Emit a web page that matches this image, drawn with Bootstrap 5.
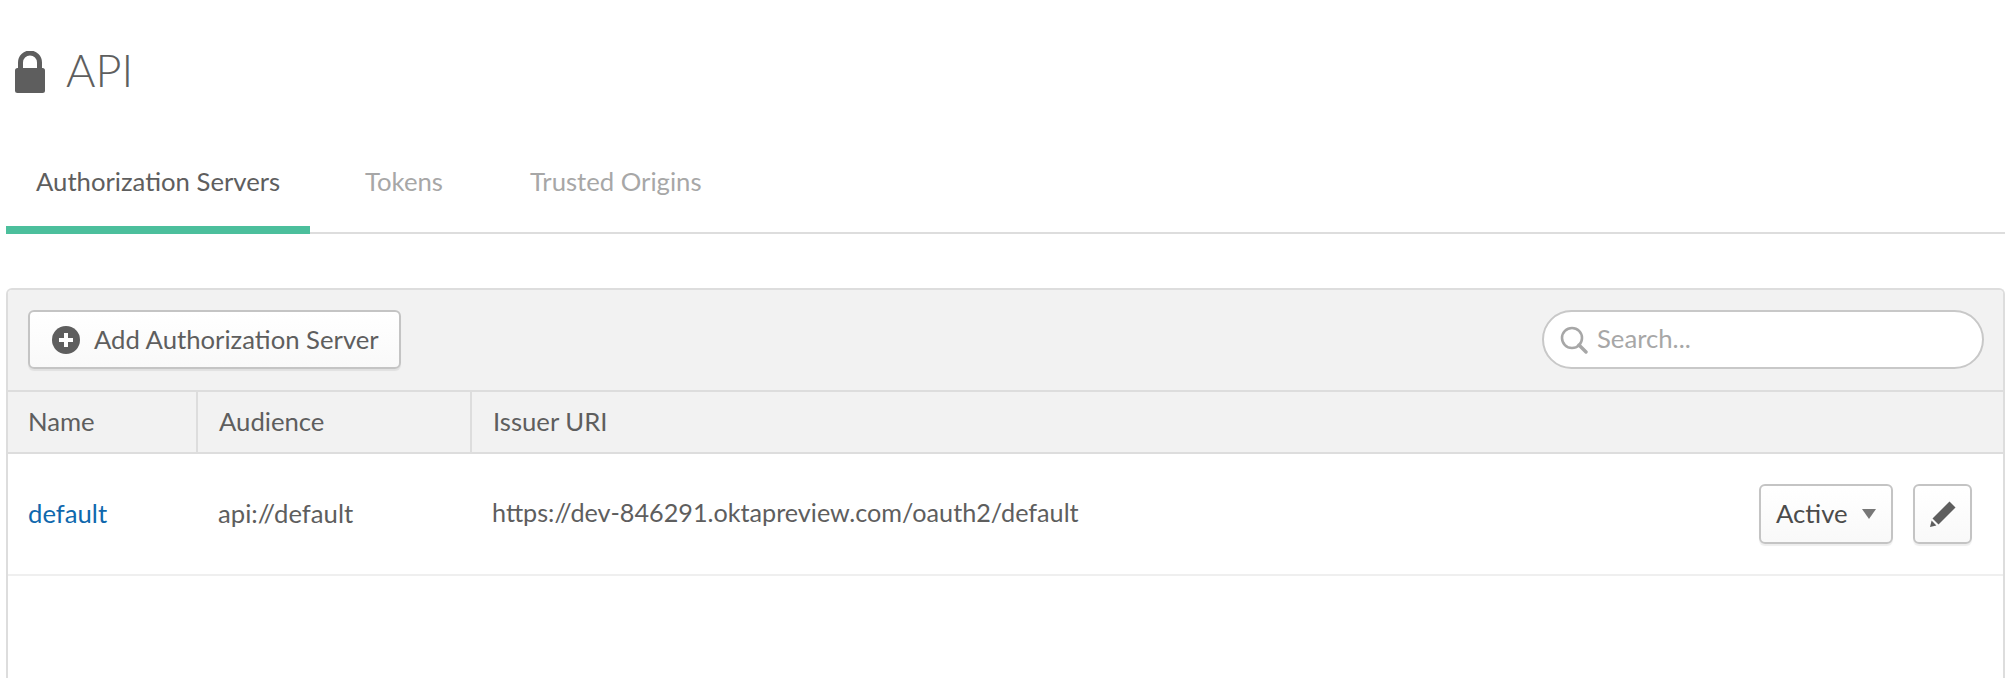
<!DOCTYPE html>
<html lang="en">
<head>
  <meta charset="UTF-8" />
  <meta name="viewport" content="width=device-width, initial-scale=1">
  <title>API</title>
  <link href="https://cdn.jsdelivr.net/npm/bootstrap@5.3.0/dist/css/bootstrap.min.css" rel="stylesheet">
  <style>
    html, body { height: 678px; overflow: hidden; }
    body {
      padding: 0 11px 0 6px;
      background: #fff;
      color: #5e5e5e;
      font-family: Lato, "Liberation Sans", sans-serif;
      font-size: 25.7px;
    }
    .page-head { height: 144px; padding-left: 9px; gap: 21px; }
    .page-head h1 { margin: 0 0 4px; font-family: Lato, sans-serif; font-size: 45px; font-weight: 300; color: #5e5e5e; line-height: 1; }
    .tab-bar { height: 90px; border-bottom: 2px solid #ddd; }
    .tab-bar .nav-link {
      height: 90px;
      padding: 22px 30px 0;
      color: #a7a7a7;
      font-size: 25.7px;
      line-height: 30px;
      border-bottom: 8px solid transparent;
    }
    .tab-bar .nav-link.active { color: #5e5e5e; border-bottom-color: #4cbf9c; }
    .tab-bar .nav-item + .nav-item { margin-left: 25px; }
    .tab-bar .nav-item:last-child { margin-left: 27px; }
    .tab-bar .nav-item:first-child .nav-link { width: 304px; white-space: nowrap; }
    .panel-box {
      margin-top: 54px;
      height: 402px;
      border: 2px solid #ddd;
      border-bottom: 0;
      border-radius: 6px 6px 0 0;
      overflow: hidden;
    }
    .panel-tools { height: 102px; background: #f2f2f2; padding: 20px 19px 0 20px; border-bottom: 2px solid #ddd; }
    .btn-add, .btn-state, .btn-edit {
      background: linear-gradient(#fff, #f9f9f9);
      border: 2px solid #c4c4c4;
      border-radius: 6px;
      color: #5e5e5e;
      font-size: 25.7px;
      line-height: 30px;
      box-shadow: 0 2px 1px rgba(0,0,0,.07);
    }
    .btn-add { width: 373px; height: 59px; padding: 0 0 2px 22px; gap: 14px; white-space: nowrap; }
    .btn-add svg { margin-top: 2px; }
    .search-wrap { width: 442px; height: 59px; background: #fff; border: 2px solid #c8c8c8; border-radius: 30px; padding: 0 0 2px 16px; gap: 9px; }
    .search-wrap svg { margin-top: 2px; }
    .search-wrap input { border: 0; outline: 0; padding: 0; width: 360px; font-size: 25.7px; color: #5e5e5e; background: transparent; font-family: inherit; }
    .search-wrap input::placeholder { color: #a7a7a7; opacity: 1; }
    .api-table { table-layout: fixed; margin: 0; font-size: 25.7px; --bs-table-color: #5e5e5e; color: #5e5e5e; }
    .api-table th {
      height: 61px;
      padding: 0 0 2px 21px;
      background: #f2f2f2;
      font-weight: 400;
      color: #5e5e5e;
      vertical-align: middle;
      border-bottom: 2px solid #ddd;
    }
    .api-table th:first-child { padding-left: 20px; }
    .api-table th + th { border-left: 2px solid #ddd; }
    .api-table td {
      height: 122px;
      padding: 0 0 2px 21px;
      vertical-align: middle;
      border-bottom: 2px solid #efefef;
      color: #5e5e5e;
    }
    .api-table td:first-child { padding-left: 20px; }
    .api-table td.uri-cell { font-size: 25.2px; }
    .api-table a { color: #0f68ad; text-decoration: none; }
    .api-table td.row-actions { padding: 0 31px 0 0; }
    .btn-state { width: 134px; height: 60px; padding: 0 0 2px 15px; color: #4b4b4b; gap: 14px; }
    .btn-edit { width: 59px; height: 60px; padding: 0; }
    .row-actions .gap-tools { gap: 20px; }
    .caret-down { width: 0; height: 0; margin-top: 2px; border-left: 7px solid transparent; border-right: 7px solid transparent; border-top: 10px solid #777; }
  </style>
</head>
<body>

  <div class="page-head d-flex align-items-center">
    <svg width="30" height="42" viewBox="0 0 30 42" aria-hidden="true">
      <path d="M5.5 19V11.5a9.5 9.5 0 0 1 19 0V19" fill="none" stroke="#5e5e5e" stroke-width="5"/>
      <rect x="0" y="17" width="30" height="25" rx="2.5" fill="#5e5e5e"/>
    </svg>
    <h1>API</h1>
  </div>

  <!-- Tabs -->
  <ul class="nav tab-bar">
    <li class="nav-item"><a class="nav-link active" href="#">Authorization Servers</a></li>
    <li class="nav-item"><a class="nav-link" href="#">Tokens</a></li>
    <li class="nav-item"><a class="nav-link" href="#">Trusted Origins</a></li>
  </ul>

  <div class="panel-box">
    <div class="panel-tools d-flex justify-content-between align-items-start">
      <button class="btn btn-add d-flex align-items-center" type="button">
        <svg width="28" height="28" viewBox="0 0 28 28" aria-hidden="true">
          <circle cx="14" cy="14" r="14" fill="#5e5e5e"/>
          <path d="M14 7v14M7 14h14" stroke="#fff" stroke-width="4"/>
        </svg>
        Add Authorization Server
      </button>
      <div class="search-wrap d-flex align-items-center">
        <svg width="28" height="28" viewBox="0 0 28 28" aria-hidden="true">
          <circle cx="12" cy="12" r="10" fill="none" stroke="#a7a7a7" stroke-width="2.6"/>
          <path d="M19 19l7 7" stroke="#a7a7a7" stroke-width="3.4" stroke-linecap="round"/>
        </svg>
        <input type="text" placeholder="Search...">
      </div>
    </div>

    <table class="table api-table">
      <colgroup>
        <col style="width:189px"><col style="width:274px"><col style="width:1120px"><col>
      </colgroup>
      <thead>
        <tr><th>Name</th><th>Audience</th><th>Issuer URI</th><th class="border-start-0"></th></tr>
      </thead>
      <tbody>
        <tr>
          <td><a href="#">default</a></td>
          <td>api://default</td>
          <td class="uri-cell">https://dev-846291.oktapreview.com/oauth2/default</td>
          <td class="row-actions">
            <div class="d-flex justify-content-end gap-tools">
              <button class="btn btn-state d-flex align-items-center" type="button">Active <span class="caret-down"></span></button>
              <button class="btn btn-edit d-flex align-items-center justify-content-center" type="button" aria-label="Edit">
                <svg width="26" height="26" viewBox="0 0 26 26" aria-hidden="true">
                  <path d="M19.5 0.5L25.5 6.5 8.5 23.5 2.5 17.5z" fill="#5e5e5e"/>
                  <path d="M1.6 19.6L6.4 24.4 0 26z" fill="#5e5e5e"/>
                </svg>
              </button>
            </div>
          </td>
        </tr>
      </tbody>
    </table>
  </div>

<script src="https://cdn.jsdelivr.net/npm/bootstrap@5.3.0/dist/js/bootstrap.bundle.min.js"></script>
</body>
</html>
